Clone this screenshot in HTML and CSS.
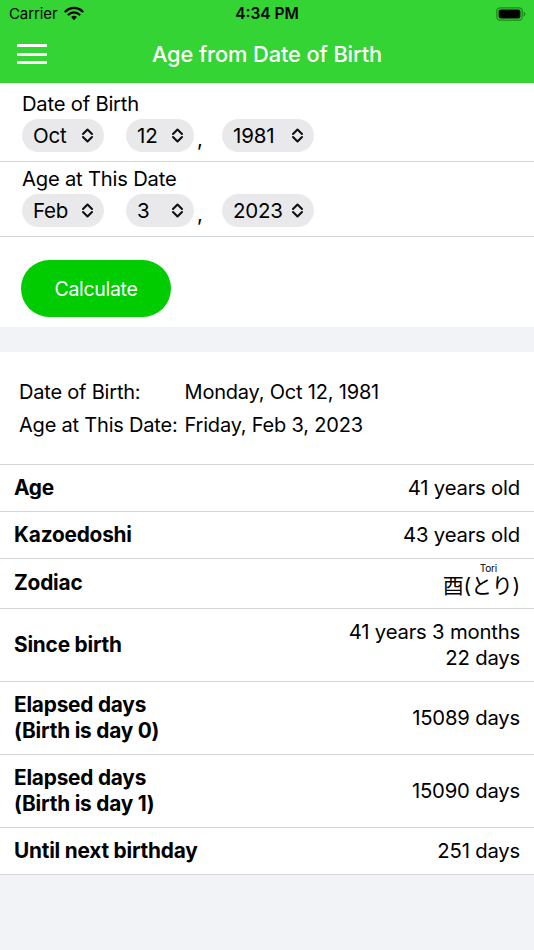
FILE: index.html
```html
<!DOCTYPE html>
<html lang="en">
<head>
<meta charset="utf-8">
<title>Age from Date of Birth</title>
<link rel="stylesheet" href="styles.css">
</head>
<body>
<header class="topbar">
  <div class="status">
    <div class="status-left">
      <span class="carrier">Carrier</span>
      <svg class="wifi" width="20" height="15" viewBox="0 0 20 15">
        <path d="M10 14.2 L7.1 11.1 A4.2 4.2 0 0 1 12.9 11.1 Z" fill="#000"/>
        <path d="M4.6 8.5 A7.8 7.8 0 0 1 15.4 8.5" fill="none" stroke="#000" stroke-width="2.4" stroke-linecap="round"/>
        <path d="M1.6 5.3 A12 12 0 0 1 18.4 5.3" fill="none" stroke="#000" stroke-width="2.4" stroke-linecap="round"/>
      </svg>
    </div>
    <span class="time">4:34 PM</span>
    <div class="status-right">
      <svg class="battery" width="30" height="14" viewBox="0 0 30 14">
        <rect x="0.8" y="0.8" width="25.4" height="12.4" rx="3.5" fill="none" stroke="#1a8a1a" stroke-width="1.3"/>
        <rect x="2.6" y="2.6" width="21.8" height="8.8" rx="2" fill="#000"/>
        <path d="M27.6 4.8 Q29.4 5.2 29.4 7 Q29.4 8.8 27.6 9.2 Z" fill="#1a8a1a"/>
      </svg>
    </div>
  </div>
  <div class="navbar">
    <button class="menu" aria-label="Menu"><span></span><span></span><span></span></button>
    <h1 class="title">Age from Date of Birth</h1>
  </div>
</header>

<section class="form">
  <div class="field">
    <div class="field-label">Date of Birth</div>
    <div class="pickers">
      <div class="pill pill-month">Oct<svg class="chev" width="13" height="17" viewBox="0 0 13 17"><path d="M2 7 L6.5 2.5 L11 7 M2 10 L6.5 14.5 L11 10" fill="none" stroke="#111" stroke-width="2.1" stroke-linecap="round" stroke-linejoin="round"/></svg></div>
      <div class="pill pill-day">12<svg class="chev" width="13" height="17" viewBox="0 0 13 17"><path d="M2 7 L6.5 2.5 L11 7 M2 10 L6.5 14.5 L11 10" fill="none" stroke="#111" stroke-width="2.1" stroke-linecap="round" stroke-linejoin="round"/></svg></div>
      <span class="comma">,</span>
      <div class="pill pill-year">1981<svg class="chev" width="13" height="17" viewBox="0 0 13 17"><path d="M2 7 L6.5 2.5 L11 7 M2 10 L6.5 14.5 L11 10" fill="none" stroke="#111" stroke-width="2.1" stroke-linecap="round" stroke-linejoin="round"/></svg></div>
    </div>
  </div>
  <div class="field">
    <div class="field-label">Age at This Date</div>
    <div class="pickers">
      <div class="pill pill-month">Feb<svg class="chev" width="13" height="17" viewBox="0 0 13 17"><path d="M2 7 L6.5 2.5 L11 7 M2 10 L6.5 14.5 L11 10" fill="none" stroke="#111" stroke-width="2.1" stroke-linecap="round" stroke-linejoin="round"/></svg></div>
      <div class="pill pill-day">3<svg class="chev" width="13" height="17" viewBox="0 0 13 17"><path d="M2 7 L6.5 2.5 L11 7 M2 10 L6.5 14.5 L11 10" fill="none" stroke="#111" stroke-width="2.1" stroke-linecap="round" stroke-linejoin="round"/></svg></div>
      <span class="comma">,</span>
      <div class="pill pill-year">2023<svg class="chev" width="13" height="17" viewBox="0 0 13 17"><path d="M2 7 L6.5 2.5 L11 7 M2 10 L6.5 14.5 L11 10" fill="none" stroke="#111" stroke-width="2.1" stroke-linecap="round" stroke-linejoin="round"/></svg></div>
    </div>
  </div>
  <div class="actions">
    <button class="calc">Calculate</button>
  </div>
</section>

<div class="spacer"></div>

<section class="results">
  <dl class="summary">
    <dt>Date of Birth:</dt><dd>Monday, Oct 12, 1981</dd>
    <dt>Age at This Date:</dt><dd>Friday, Feb 3, 2023</dd>
  </dl>
  <div class="table">
    <div class="row"><div class="k">Age</div><div class="v">41 years old</div></div>
    <div class="row"><div class="k">Kazoedoshi</div><div class="v">43 years old</div></div>
    <div class="row row-zodiac"><div class="k">Zodiac</div><div class="v"><ruby>酉(とり)<rt>Tori</rt></ruby></div></div>
    <div class="row"><div class="k">Since birth</div><div class="v">41 years 3 months<br>22 days</div></div>
    <div class="row"><div class="k">Elapsed days<br>(Birth is day 0)</div><div class="v">15089 days</div></div>
    <div class="row"><div class="k">Elapsed days<br>(Birth is day 1)</div><div class="v">15090 days</div></div>
    <div class="row"><div class="k">Until next birthday</div><div class="v">251 days</div></div>
  </div>
</section>
</body>
</html>
```

FILE: styles.css
```css
* { box-sizing: border-box; }
html, body { margin: 0; padding: 0; }
body {
  width: 534px;
  min-height: 950px;
  background: #f2f3f7;
  font-family: Inter, "Noto Sans CJK JP", sans-serif;
  color: #000;
}

.topbar { background: #33d433; }
.status {
  height: 27px;
  display: flex;
  align-items: center;
  justify-content: space-between;
  padding: 0 8px 0 9px;
  position: relative;
}
.status-left { display: flex; align-items: center; gap: 7px; }
.carrier { font-size: 15px; letter-spacing: -0.1px; }
.wifi { margin-top: -1px; }
.time {
  position: absolute;
  left: 0; right: 0;
  text-align: center;
  font-size: 15.5px;
  font-weight: 600;
  pointer-events: none;
}
.battery { display: block; }

.navbar {
  height: 56px;
  display: flex;
  align-items: center;
  position: relative;
}
.menu {
  background: none;
  border: 0;
  padding: 0;
  margin-left: 17px;
  width: 30px;
  display: flex;
  flex-direction: column;
  gap: 5.5px;
  margin-top: -2px;
}
.menu span { display: block; height: 3px; background: #fff; border-radius: 1px; }
.title {
  position: absolute;
  left: 0; right: 0;
  margin: 0;
  margin-top: -2px;
  text-align: center;
  color: #fff;
  font-size: 21.8px;
  font-weight: 500;
  letter-spacing: -0.1px;
}

.form { background: #fff; padding-top: 4px; }
.field {
  padding: 5px 0 9px 22px;
  border-bottom: 1.5px solid #d5d5d8;
}
.field + .field { padding-top: 5px; }
.field-label { font-size: 20.2px; line-height: 24px; letter-spacing: -0.2px; }
.pickers { display: flex; align-items: center; margin-top: 3px; }
.pill {
  height: 33px;
  border-radius: 17px;
  background: #e9e9eb;
  display: flex;
  align-items: center;
  justify-content: space-between;
  padding: 0 10px 0 11px;
  font-size: 20.5px;
  letter-spacing: -0.2px;
}
.pill-month { width: 82px; }
.pill-day { width: 68px; margin-left: 22px; }
.pill-year { width: 92px; }
.comma { width: 28px; font-size: 20.5px; padding-left: 3px; margin-top: 6px; }
.chev { display: block; flex: none; }

.actions { padding: 23px 0 10px 21px; }
.calc {
  width: 150px;
  height: 57px;
  border: 0;
  border-radius: 28.5px;
  background: #00cc00;
  color: #fff;
  font-family: inherit;
  font-size: 19.5px;
  letter-spacing: -0.3px;
}

.spacer { height: 25px; }

.results { background: #fff; }
.summary {
  margin: 0;
  padding: 24px 19px 22px;
  display: grid;
  grid-template-columns: auto 1fr;
  column-gap: 7px;
  font-size: 20px;
  line-height: 33px;
  letter-spacing: -0.2px;
}
.summary dt, .summary dd { margin: 0; }

.table { border-top: 1.5px solid #d5d5d8; }
.row {
  display: flex;
  align-items: center;
  justify-content: space-between;
  padding: 10px 14px 10px 14px;
  border-bottom: 1.5px solid #d5d5d8;
  font-size: 20.3px;
  line-height: 26px;
  letter-spacing: -0.2px;
}
.k { font-weight: 700; font-size: 20.8px; }
.v { text-align: right; }
.row-zodiac { padding-top: 5px; padding-bottom: 9px; align-items: flex-end; }
.row-zodiac .k { padding-bottom: 3px; }
.row-zodiac .v { font-size: 21px; line-height: 26px; }
.row-zodiac ruby { ruby-position: over; }
.row-zodiac rt { font-size: 10px; font-family: Inter, sans-serif; line-height: 11px; padding-left: 14px; }
```
